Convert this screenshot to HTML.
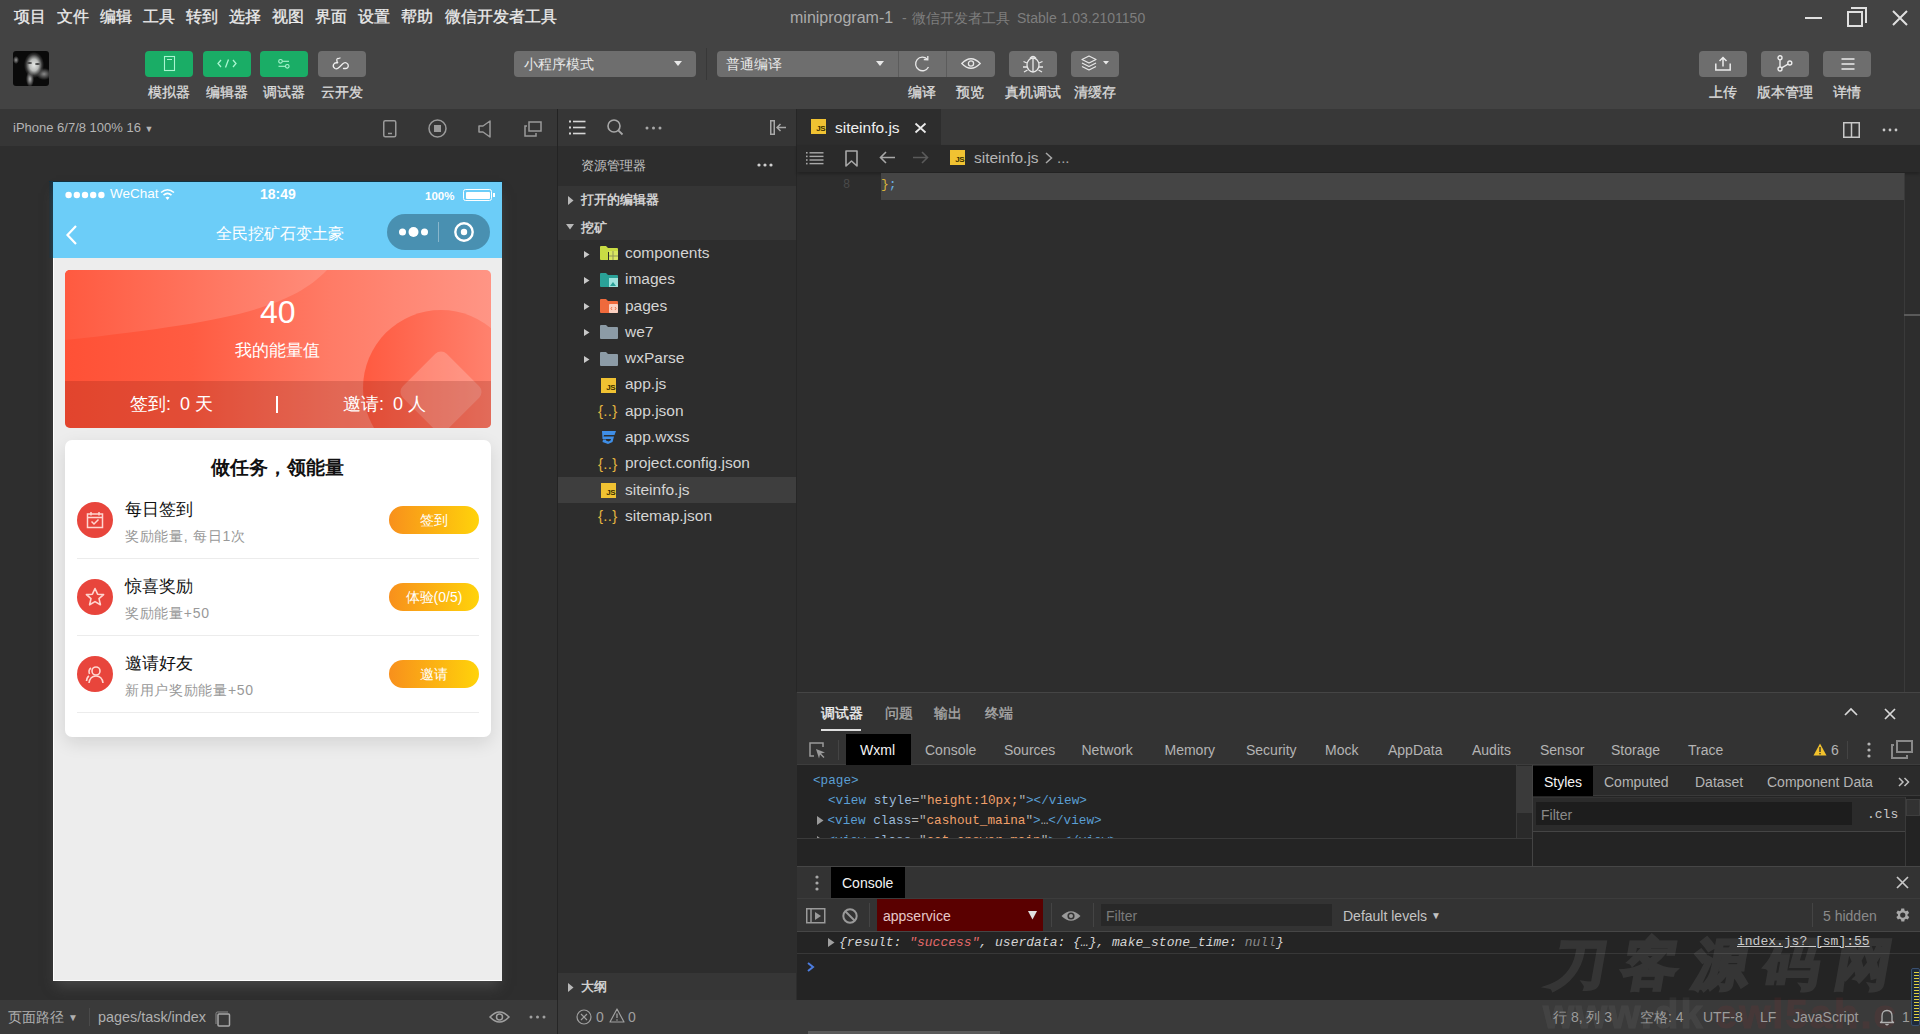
<!DOCTYPE html>
<html><head><meta charset="utf-8">
<style>
*{box-sizing:border-box;margin:0;padding:0}
html,body{width:1920px;height:1034px;overflow:hidden;background:#2d2d2d;font-family:"Liberation Sans",sans-serif;position:relative}
.menu span,.lbl{-webkit-text-stroke-width:0.3px}
.a{position:absolute}
.t{position:absolute;white-space:nowrap;line-height:1}
svg{position:absolute;overflow:visible}
.menu span{position:absolute;top:9px;font-size:16px;color:#ececec;line-height:1;white-space:nowrap}
.btn{position:absolute;top:51px;width:48px;height:26px;border-radius:4px;background:#6e6e6e}
.g{background:#1aad66}
.lbl{position:absolute;top:85px;font-size:14px;color:#dcdcdc;line-height:1;white-space:nowrap;transform:translateX(-50%)}
</style></head><body>
<!-- top bar -->
<div class="a" style="left:0;top:0;width:1920px;height:109px;background:#434343"></div>
<div class="menu">
<span style="left:14px">项目</span><span style="left:57px">文件</span><span style="left:100px">编辑</span><span style="left:143px">工具</span><span style="left:186px">转到</span><span style="left:229px">选择</span><span style="left:272px">视图</span><span style="left:315px">界面</span><span style="left:358px">设置</span><span style="left:401px">帮助</span><span style="left:445px">微信开发者工具</span>
</div>
<div class="t" style="left:790px;top:10px;font-size:16px;color:#acacac">miniprogram-1</div>
<div class="t" style="left:902px;top:11px;font-size:14px;color:#7e7e7e">-</div>
<div class="t" style="left:912px;top:11px;font-size:14.3px;color:#7e7e7e">微信开发者工具</div>
<div class="t" style="left:1017px;top:11px;font-size:14px;color:#7e7e7e">Stable 1.03.2101150</div>
<!-- window controls -->
<div class="a" style="left:1805px;top:17px;width:17px;height:2px;background:#e0e0e0"></div>
<div class="a" style="left:1847px;top:11px;width:16px;height:16px;border:2px solid #e0e0e0"></div>
<div class="a" style="left:1851px;top:7px;width:16px;height:16px;border-top:2px solid #e0e0e0;border-right:2px solid #e0e0e0"></div>
<svg style="left:1892px;top:10px" width="16" height="16"><path d="M1 1L15 15M15 1L1 15" stroke="#e0e0e0" stroke-width="2"/></svg>

<!-- avatar -->
<div class="a" style="left:13px;top:51px;width:36px;height:35px;border-radius:3px;overflow:hidden;background:
radial-gradient(ellipse 10px 13px at 21px 14px,#e6e8e6 0%,#b8bab8 45%,rgba(80,80,80,0.6) 80%,rgba(0,0,0,0) 100%),
radial-gradient(ellipse 4px 8px at 17px 28px,#bbb 0%,rgba(0,0,0,0) 100%),
radial-gradient(ellipse 8px 6px at 31px 23px,#8a8a8a 0%,rgba(0,0,0,0) 100%),
radial-gradient(ellipse 3px 4px at 3px 9px,#999 0%,rgba(0,0,0,0) 100%),
#0a0a0a">
<div class="a" style="left:14px;top:11px;width:5px;height:2px;background:#444;border-radius:50%;filter:blur(0.6px)"></div>
<div class="a" style="left:22px;top:12px;width:5px;height:2px;background:#444;border-radius:50%;filter:blur(0.6px)"></div>
</div>
<!-- left buttons -->
<div class="btn g" style="left:145px"></div>
<div class="btn g" style="left:203px"></div>
<div class="btn g" style="left:260px"></div>
<div class="btn" style="left:318px"></div>
<div class="lbl" style="left:169px">模拟器</div>
<div class="lbl" style="left:227px">编辑器</div>
<div class="lbl" style="left:284px">调试器</div>
<div class="lbl" style="left:342px">云开发</div>

<!-- mode dropdown -->
<div class="btn" style="left:514px;width:182px"></div>
<div class="t" style="left:524px;top:57px;font-size:14px;color:#e8e8e8">小程序模式</div>
<div class="a" style="left:706px;top:48px;width:1px;height:32px;background:#383838"></div>
<div class="btn" style="left:717px;width:278px"></div>
<div class="t" style="left:726px;top:57px;font-size:14px;color:#e8e8e8">普通编译</div>
<div class="a" style="left:898px;top:51px;width:1px;height:26px;background:#5c5c5c"></div>
<div class="a" style="left:946px;top:51px;width:1px;height:26px;background:#5c5c5c"></div>
<div class="btn" style="left:1009px"></div>
<div class="btn" style="left:1071px"></div>
<div class="lbl" style="left:922px">编译</div>
<div class="lbl" style="left:970px">预览</div>
<div class="lbl" style="left:1033px">真机调试</div>
<div class="lbl" style="left:1095px">清缓存</div>

<div class="btn" style="left:1699px"></div>
<div class="btn" style="left:1761px"></div>
<div class="btn" style="left:1823px"></div>
<div class="lbl" style="left:1723px">上传</div>
<div class="lbl" style="left:1785px">版本管理</div>
<div class="lbl" style="left:1847px">详情</div>



<!-- toolbar icons -->
<svg style="left:164px;top:56px" width="11" height="15"><rect x="0.5" y="0.5" width="10" height="14" fill="none" stroke="#a8f5cf" stroke-width="1.1"/><line x1="3" y1="3.5" x2="8" y2="3.5" stroke="#a8f5cf" stroke-width="1"/></svg>
<svg style="left:217px;top:59px" width="20" height="9"><path d="M4 1L1 4.5L4 8M16 1L19 4.5L16 8M11.5 0.5L8.5 8.5" fill="none" stroke="#a8f5cf" stroke-width="1.3"/></svg>
<svg style="left:278px;top:59px" width="12" height="10"><circle cx="2.5" cy="2.3" r="1.8" fill="none" stroke="#a8f5cf" stroke-width="1.1"/><line x1="4.3" y1="2.3" x2="11" y2="2.3" stroke="#a8f5cf" stroke-width="1.1"/><circle cx="9.3" cy="7.3" r="1.8" fill="none" stroke="#a8f5cf" stroke-width="1.1"/><line x1="0.5" y1="7.3" x2="7.5" y2="7.3" stroke="#a8f5cf" stroke-width="1.1"/></svg>
<svg style="left:332px;top:57px" width="18" height="13"><path d="M6.5 1.5Q5 1 4.8 3Q4.8 5 6 6Q3 5 1.5 7.5Q0.5 10 3 11.5Q5 12.5 7.5 10L10.5 7Q12.5 5 14.5 6Q16.5 7 16.3 9Q16 11.5 13.5 11.5L11.5 11.5" fill="none" stroke="#f0f0f0" stroke-width="1.3" stroke-linecap="round"/><path d="M6.5 1.5L8 1" fill="none" stroke="#f0f0f0" stroke-width="1.3" stroke-linecap="round"/></svg>
<svg style="left:674px;top:61px" width="8" height="6"><path d="M0 0L8 0L4 5Z" fill="#e8e8e8"/></svg>
<svg style="left:876px;top:61px" width="8" height="6"><path d="M0 0L8 0L4 5Z" fill="#e8e8e8"/></svg>
<svg style="left:914px;top:55px" width="17" height="17"><path d="M13.3 4.2A6.8 6.8 0 1 0 14.5 12" fill="none" stroke="#e8e8e8" stroke-width="1.3"/><path d="M9.8 4.5L13.8 4.8L13.8 1" fill="none" stroke="#e8e8e8" stroke-width="1.3"/></svg>
<svg style="left:961px;top:57px" width="20" height="13"><path d="M0.8 6.5Q10 -3 19.2 6.5Q10 16 0.8 6.5Z" fill="none" stroke="#e8e8e8" stroke-width="1.3"/><circle cx="10" cy="6.5" r="2.6" fill="none" stroke="#e8e8e8" stroke-width="1.3"/></svg>
<svg style="left:1022px;top:54px" width="22" height="19"><ellipse cx="11" cy="11" rx="6" ry="7" fill="none" stroke="#e8e8e8" stroke-width="1.3"/><path d="M8 4.5Q11 0.5 14 4.5" fill="none" stroke="#e8e8e8" stroke-width="1.3"/><line x1="11" y1="4" x2="11" y2="18" stroke="#e8e8e8" stroke-width="1.3"/><path d="M5 9L1.5 7.5M17 9L20.5 7.5M5 13L1 13M17 13L21 13M5.5 16L2 18M16.5 16L20 18" stroke="#e8e8e8" stroke-width="1.3"/></svg>
<svg style="left:1081px;top:55px" width="28" height="17"><path d="M8 1L15 4.5L8 8L1 4.5Z" fill="none" stroke="#e8e8e8" stroke-width="1.2" stroke-linejoin="round"/><path d="M1 8L8 11.5L15 8M1 11.5L8 15L15 11.5" fill="none" stroke="#e8e8e8" stroke-width="1.2" stroke-linejoin="round"/><path d="M22 6L28 6L25 9.5Z" fill="#e8e8e8"/></svg>
<svg style="left:1715px;top:56px" width="16" height="15"><path d="M8 10.5L8 1.5M4.5 5L8 1.5L11.5 5" fill="none" stroke="#ececec" stroke-width="1.5"/><path d="M0.8 7.5L0.8 14L15.2 14L15.2 7.5" fill="none" stroke="#ececec" stroke-width="1.5"/></svg>
<svg style="left:1777px;top:55px" width="16" height="17"><circle cx="3" cy="2.8" r="2" fill="none" stroke="#ececec" stroke-width="1.4"/><circle cx="3" cy="14" r="2" fill="none" stroke="#ececec" stroke-width="1.4"/><circle cx="12.8" cy="8" r="2" fill="none" stroke="#ececec" stroke-width="1.4"/><line x1="3" y1="4.8" x2="3" y2="12" stroke="#ececec" stroke-width="1.4"/><path d="M11 9.2L4.6 12.8" fill="none" stroke="#ececec" stroke-width="1.4"/></svg>
<svg style="left:1841px;top:58px" width="14" height="12"><path d="M0.5 1L13.5 1M0.5 6L13.5 6M0.5 11L13.5 11" stroke="#ececec" stroke-width="1.5"/></svg>
<!-- sim header -->
<div class="a" style="left:0;top:109px;width:557px;height:37px;background:#363636"></div>
<div class="t" style="left:13px;top:121px;font-size:13px;color:#b4b4b4">iPhone 6/7/8 100% 16 <span style="font-size:9px">&#9660;</span></div>
<svg style="left:383px;top:120px" width="14" height="18"><rect x="0.75" y="0.75" width="12" height="16" rx="1.5" fill="none" stroke="#9a9a9a" stroke-width="1.5"/><line x1="5" y1="13.5" x2="9" y2="13.5" stroke="#9a9a9a" stroke-width="1.5"/></svg>
<svg style="left:428px;top:119px" width="19" height="19"><circle cx="9.5" cy="9.5" r="8.5" fill="none" stroke="#9a9a9a" stroke-width="1.5"/><rect x="6" y="6" width="7" height="7" fill="#9a9a9a"/></svg>
<svg style="left:478px;top:120px" width="13" height="18"><path d="M12 1L12 17L5 12L1 12L1 6L5 6Z" fill="none" stroke="#9a9a9a" stroke-width="1.5" stroke-linejoin="round"/></svg>
<svg style="left:524px;top:121px" width="18" height="16"><rect x="5" y="1" width="12" height="9" fill="none" stroke="#9a9a9a" stroke-width="1.5"/><path d="M3 5L1 5L1 15L12 15L12 12" fill="none" stroke="#9a9a9a" stroke-width="1.5"/></svg>
<!-- sim body -->
<div class="a" style="left:0;top:146px;width:557px;height:854px;background:#2e2e2e"></div>
<!-- phone -->
<div class="a" style="left:49px;top:181px;width:454px;height:1px;background:#123240"></div>
<div class="a" style="left:49px;top:181px;width:4px;height:77px;background:linear-gradient(90deg,rgba(20,45,60,0.3),#15384a)"></div>
<div class="a" style="left:53px;top:182px;width:449px;height:799px;background:#ededed;box-shadow:0 8px 12px -3px rgba(100,100,100,0.5);overflow:hidden">
  <div class="a" style="left:0;top:76px;width:449px;height:723px;box-shadow:inset 1px -1px 0 #fff;z-index:5"></div>
  <div class="a" style="left:0;top:0;width:449px;height:76px;background:#6ccdf8"></div>
  <svg style="left:12px;top:9px" width="42" height="8"><circle cx="3.6" cy="4" r="3.2" fill="#fff"/><circle cx="11.8" cy="4" r="3.2" fill="#fff"/><circle cx="20.0" cy="4" r="3.2" fill="#fff"/><circle cx="28.2" cy="4" r="3.2" fill="#fff"/><circle cx="36.4" cy="4" r="3.2" fill="#fff"/></svg>
  <div class="t" style="left:57px;top:5px;font-size:13.5px;color:#fff">WeChat</div>
  <svg style="left:107px;top:6px" width="15" height="13"><path d="M1 4.5Q7.5 -1 14 4.5" fill="none" stroke="#fff" stroke-width="1.6"/><path d="M3.5 7.2Q7.5 3.5 11.5 7.2" fill="none" stroke="#fff" stroke-width="1.6"/><path d="M5.5 9.6L7.5 12L9.5 9.6Q7.5 7.8 5.5 9.6Z" fill="#fff"/></svg>
  <div class="t" style="left:207px;top:5px;font-size:14px;color:#fff;font-weight:bold">18:49</div>
  <div class="t" style="left:372px;top:9px;font-size:11.5px;color:#fff;font-weight:bold">100%</div>
  <div class="a" style="left:410px;top:7px;width:29px;height:12px;border:1.5px solid #fff;border-radius:2.5px;padding:1.5px"><div style="width:100%;height:100%;background:#fff;border-radius:1px"></div></div>
  <div class="a" style="left:440px;top:11px;width:2px;height:4px;background:#fff"></div>
  <svg style="left:12px;top:42px" width="14" height="22"><path d="M11 2L2.5 11L11 20" fill="none" stroke="#fff" stroke-width="2.2"/></svg>
  <div class="t" style="left:163px;top:44px;font-size:15.5px;color:#fff">全民挖矿石变土豪</div>
  <div class="a" style="left:334px;top:32px;width:103px;height:36px;border-radius:18px;background:rgba(30,70,90,0.45)"></div>
  <svg style="left:334px;top:32px" width="103" height="36"><circle cx="15.5" cy="18" r="3.5" fill="#fff"/><circle cx="26.5" cy="18" r="5" fill="#fff"/><circle cx="37.5" cy="18" r="3.5" fill="#fff"/><line x1="51.5" y1="8" x2="51.5" y2="28" stroke="rgba(255,255,255,0.35)" stroke-width="1"/><circle cx="77" cy="18" r="8.7" fill="none" stroke="#fff" stroke-width="2.4"/><circle cx="77" cy="18" r="3.2" fill="#fff"/></svg>
  <!-- red card -->
  <div class="a" style="left:12px;top:88px;width:426px;height:158px;border-radius:5px;overflow:hidden;background:linear-gradient(90deg,#ff5136 0%,#ff5c42 30%,#ff7b66 62%,#ff9585 100%)">
    <svg style="left:0;top:0" width="426" height="158"><defs><linearGradient id="lg1" x1="0" x2="1" y1="0" y2="0"><stop offset="0" stop-color="#ff5a40"/><stop offset="1" stop-color="#ff8d7b"/></linearGradient><linearGradient id="lg2" x1="0" x2="1" y1="0" y2="0"><stop offset="0" stop-color="#ff5a40"/><stop offset="1" stop-color="#ff8a78"/></linearGradient></defs>
    <path d="M0 0L262 0C225 38 165 52 0 70Z" fill="url(#lg1)"/>
    <circle cx="376" cy="118" r="78" fill="url(#lg2)"/>
    <rect x="345" y="91" width="62" height="62" rx="8" transform="rotate(45 376 122)" fill="rgba(255,255,255,0.2)"/>
    </svg>
    <div class="a" style="left:0;top:111px;width:426px;height:47px;background:rgba(110,20,10,0.2)"></div>
  </div>
<div class="t" style="left:207px;top:114px;font-size:32px;color:#fff">40</div>
  <div class="t" style="left:182px;top:160px;font-size:17px;color:#fff">我的能量值</div>
  <div class="t" style="left:77px;top:213px;font-size:18px;color:#fff">签到:<span style="margin-left:9px">0 天</span></div>
  <div class="a" style="left:223px;top:214px;width:2px;height:17px;background:#fff"></div>
  <div class="t" style="left:290px;top:213px;font-size:18px;color:#fff">邀请:<span style="margin-left:9px">0 人</span></div>
  <!-- task card -->
  <div class="a" style="left:12px;top:258px;width:426px;height:297px;border-radius:7px;background:#fff;box-shadow:0 6px 18px rgba(0,0,0,0.11)"></div>
  <div class="t" style="left:158px;top:276px;font-size:19px;color:#111;font-weight:bold">做任务，领能量</div>
  <div class="a" style="left:24px;top:320px;width:36px;height:36px;border-radius:50%;background:#e8453c"></div>
  <svg style="left:33px;top:329px" width="18" height="18"><rect x="1.5" y="3" width="15" height="13.5" fill="none" stroke="#ffd6d0" stroke-width="1.5"/><line x1="1.5" y1="6.5" x2="16.5" y2="6.5" stroke="#ffd6d0" stroke-width="1.5"/><line x1="5" y1="1" x2="5" y2="4.5" stroke="#ffd6d0" stroke-width="1.5"/><line x1="13" y1="1" x2="13" y2="4.5" stroke="#ffd6d0" stroke-width="1.5"/><path d="M5.5 10.5L8 13L12.5 8.5" fill="none" stroke="#ffd6d0" stroke-width="1.5"/></svg>
  <div class="t" style="left:72px;top:319px;font-size:17px;color:#111">每日签到</div>
  <div class="t" style="left:72px;top:347px;font-size:14px;color:#999;letter-spacing:0.7px">奖励能量, 每日1次</div>
  <div class="a" style="left:336px;top:324px;width:90px;height:28px;border-radius:14px;background:linear-gradient(90deg,#f8901c,#ffd30a);color:#fff;font-size:14px;line-height:28px;text-align:center">签到</div>
  <div class="a" style="left:24px;top:376px;width:402px;height:1px;background:#ececec"></div>
<div class="a" style="left:24px;top:397px;width:36px;height:36px;border-radius:50%;background:#e8453c"></div>
  <svg style="left:32px;top:405px" width="20" height="20"><path d="M10 1.5L12.6 7.2L18.6 7.6L14 11.6L15.4 17.8L10 14.6L4.6 17.8L6 11.6L1.4 7.6L7.4 7.2Z" fill="none" stroke="#ffd6d0" stroke-width="1.6" stroke-linejoin="round"/></svg>
  <div class="t" style="left:72px;top:396px;font-size:17px;color:#111">惊喜奖励</div>
  <div class="t" style="left:72px;top:424px;font-size:14px;color:#999;letter-spacing:0.7px">奖励能量+50</div>
  <div class="a" style="left:336px;top:401px;width:90px;height:28px;border-radius:14px;background:linear-gradient(90deg,#f8901c,#ffd30a);color:#fff;font-size:14px;line-height:28px;text-align:center">体验(0/5)</div>
  <div class="a" style="left:24px;top:453px;width:402px;height:1px;background:#ececec"></div>
<div class="a" style="left:24px;top:474px;width:36px;height:36px;border-radius:50%;background:#e8453c"></div>
  <svg style="left:32px;top:483px" width="20" height="20"><circle cx="11" cy="6" r="4" fill="none" stroke="#ffd6d0" stroke-width="1.6"/><path d="M4 18Q5 11 11 11Q17 11 18 18" fill="none" stroke="#ffd6d0" stroke-width="1.6"/><path d="M6 3Q3 5 4.5 9" fill="none" stroke="#ffd6d0" stroke-width="1.6"/><path d="M1.5 16Q2 12 4 11" fill="none" stroke="#ffd6d0" stroke-width="1.6"/></svg>
  <div class="t" style="left:72px;top:473px;font-size:17px;color:#111">邀请好友</div>
  <div class="t" style="left:72px;top:501px;font-size:14px;color:#999;letter-spacing:0.7px">新用户奖励能量+50</div>
  <div class="a" style="left:336px;top:478px;width:90px;height:28px;border-radius:14px;background:linear-gradient(90deg,#f8901c,#ffd30a);color:#fff;font-size:14px;line-height:28px;text-align:center">邀请</div>
  <div class="a" style="left:24px;top:530px;width:402px;height:1px;background:#ececec"></div>

</div>

<div class="a" style="left:557px;top:109px;width:1px;height:891px;background:#232323"></div>
<!-- explorer -->
<div class="a" style="left:558px;top:109px;width:238px;height:37px;background:#363636"></div>
<div class="a" style="left:558px;top:146px;width:238px;height:854px;background:#2d2d2d"></div>
<svg style="left:569px;top:120px" width="17" height="15"><g fill="#d6d6d6"><rect x="0" y="0.5" width="2" height="2"/><rect x="0" y="6.5" width="2" height="2"/><rect x="0" y="12.5" width="2" height="2"/><rect x="4" y="0.7" width="12.5" height="1.6"/><rect x="4" y="6.7" width="12.5" height="1.6"/><rect x="4" y="12.7" width="12.5" height="1.6"/></g></svg>
<svg style="left:607px;top:119px" width="17" height="17"><circle cx="7" cy="7" r="6" fill="none" stroke="#a8a8a8" stroke-width="1.6"/><line x1="11.3" y1="11.3" x2="15.5" y2="15.5" stroke="#a8a8a8" stroke-width="1.8"/></svg>
<svg style="left:645px;top:126px" width="17" height="4"><circle cx="2" cy="2" r="1.5" fill="#a8a8a8"/><circle cx="8.5" cy="2" r="1.5" fill="#a8a8a8"/><circle cx="15" cy="2" r="1.5" fill="#a8a8a8"/></svg>
<svg style="left:770px;top:120px" width="17" height="15"><rect x="0.75" y="0.75" width="3.5" height="13.5" fill="none" stroke="#a8a8a8" stroke-width="1.5"/><path d="M16 7.5L7 7.5M10.5 4L7 7.5L10.5 11" fill="none" stroke="#a8a8a8" stroke-width="1.5"/></svg>
<div class="t" style="left:581px;top:159px;font-size:13px;color:#c4c4c4">资源管理器</div>
<svg style="left:757px;top:163px" width="16" height="4"><circle cx="2" cy="2" r="1.6" fill="#d0d0d0"/><circle cx="8" cy="2" r="1.6" fill="#d0d0d0"/><circle cx="14" cy="2" r="1.6" fill="#d0d0d0"/></svg>
<div class="a" style="left:558px;top:186px;width:238px;height:54px;background:#353535"></div>
<svg style="left:568px;top:196px" width="6" height="9"><path d="M0 0L5.5 4.5L0 9Z" fill="#b8b8b8"/></svg>
<div class="t" style="left:581px;top:193px;font-size:13px;color:#d0d0d0;font-weight:bold">打开的编辑器</div>
<svg style="left:566px;top:224px" width="8" height="6"><path d="M0 0L8 0L4 5.5Z" fill="#b8b8b8"/></svg>
<div class="t" style="left:581px;top:221px;font-size:13px;color:#d0d0d0;font-weight:bold">挖矿</div>
<div class="a" style="left:558px;top:477px;width:238px;height:26px;background:#3e3e3e"></div>
<svg style="left:584px;top:251px" width="6" height="7"><path d="M0 0L5.5 3.5L0 7Z" fill="#c8c8c8"/></svg><svg style="left:600px;top:246px" width="18" height="14"><path d="M0 1Q0 0 1 0L6 0L8 2L17 2Q18 2 18 3L18 13Q18 14 17 14L1 14Q0 14 0 13Z" fill="#c9dc44"/><g fill="#2c2c2c"><rect x="8" y="6" width="1" height="8"/><rect x="8" y="9.5" width="10" height="1"/><rect x="12.5" y="5" width="1" height="9"/></g><rect x="9" y="5" width="9" height="9" fill="#e6f07a" opacity="0.55"/></svg><div class="t" style="left:625px;top:245px;font-size:15.5px;color:#d4d4d4">components</div><svg style="left:584px;top:277px" width="6" height="7"><path d="M0 0L5.5 3.5L0 7Z" fill="#c8c8c8"/></svg><svg style="left:600px;top:273px" width="18" height="14"><path d="M0 1Q0 0 1 0L6 0L8 2L17 2Q18 2 18 3L18 13Q18 14 17 14L1 14Q0 14 0 13Z" fill="#2aa198"/><rect x="9" y="5" width="9" height="9" fill="#9fe3de"/><path d="M10 13L13 9L16 13Z" fill="#2aa198"/></svg><div class="t" style="left:625px;top:271px;font-size:15.5px;color:#d4d4d4">images</div><svg style="left:584px;top:303px" width="6" height="7"><path d="M0 0L5.5 3.5L0 7Z" fill="#c8c8c8"/></svg><svg style="left:600px;top:299px" width="18" height="14"><path d="M0 1Q0 0 1 0L6 0L8 2L17 2Q18 2 18 3L18 13Q18 14 17 14L1 14Q0 14 0 13Z" fill="#ef6a3c"/><rect x="9" y="5" width="9" height="9" rx="1" fill="#fbd0c0"/><path d="M12 8L11 9.5L12 11M15 8L16 9.5L15 11" fill="none" stroke="#ef6a3c" stroke-width="0.9"/></svg><div class="t" style="left:625px;top:298px;font-size:15.5px;color:#d4d4d4">pages</div><svg style="left:584px;top:329px" width="6" height="7"><path d="M0 0L5.5 3.5L0 7Z" fill="#c8c8c8"/></svg><svg style="left:600px;top:325px" width="18" height="14"><path d="M0 1Q0 0 1 0L6 0L8 2L17 2Q18 2 18 3L18 13Q18 14 17 14L1 14Q0 14 0 13Z" fill="#8c9ba6"/></svg><div class="t" style="left:625px;top:324px;font-size:15.5px;color:#d4d4d4">we7</div><svg style="left:584px;top:356px" width="6" height="7"><path d="M0 0L5.5 3.5L0 7Z" fill="#c8c8c8"/></svg><svg style="left:600px;top:352px" width="18" height="14"><path d="M0 1Q0 0 1 0L6 0L8 2L17 2Q18 2 18 3L18 13Q18 14 17 14L1 14Q0 14 0 13Z" fill="#8c9ba6"/></svg><div class="t" style="left:625px;top:350px;font-size:15.5px;color:#d4d4d4">wxParse</div><div class="a" style="left:601px;top:378px;width:15px;height:15px;background:#f0c232"><span class="t" style="right:1px;bottom:1px;font-size:8px;color:#3a3000;font-weight:bold;letter-spacing:-0.5px">JS</span></div><div class="t" style="left:625px;top:376px;font-size:15.5px;color:#d4d4d4">app.js</div><div class="t" style="left:598px;top:403px;font-size:15px;color:#e2b440;letter-spacing:0.3px">{..}</div><div class="t" style="left:625px;top:403px;font-size:15.5px;color:#d4d4d4">app.json</div><svg style="left:601px;top:431px" width="16" height="14"><path d="M1 0L15 0L13.5 4L3 4L2.5 5.5L13 5.5L11.5 11L7 13L1.5 11L2 8.5L5 8.5L5 9.5L7.5 10.5L9.5 9.5L10 8L1.5 8Z" fill="#3f8ee6"/></svg><div class="t" style="left:625px;top:429px;font-size:15.5px;color:#d4d4d4">app.wxss</div><div class="t" style="left:598px;top:456px;font-size:15px;color:#e2b440;letter-spacing:0.3px">{..}</div><div class="t" style="left:625px;top:455px;font-size:15.5px;color:#d4d4d4">project.config.json</div><div class="a" style="left:601px;top:483px;width:15px;height:15px;background:#f0c232"><span class="t" style="right:1px;bottom:1px;font-size:8px;color:#3a3000;font-weight:bold;letter-spacing:-0.5px">JS</span></div><div class="t" style="left:625px;top:482px;font-size:15.5px;color:#d4d4d4">siteinfo.js</div><div class="t" style="left:598px;top:508px;font-size:15px;color:#e2b440;letter-spacing:0.3px">{..}</div><div class="t" style="left:625px;top:508px;font-size:15.5px;color:#d4d4d4">sitemap.json</div>
<!-- outline -->
<div class="a" style="left:558px;top:973px;width:238px;height:27px;background:#363636"></div>
<svg style="left:568px;top:983px" width="6" height="9"><path d="M0 0L5.5 4.5L0 9Z" fill="#b8b8b8"/></svg>
<div class="t" style="left:581px;top:980px;font-size:13px;color:#d0d0d0;font-weight:bold">大纲</div>

<!-- editor -->
<div class="a" style="left:796px;top:109px;width:1px;height:583px;background:#262626"></div>
<div class="a" style="left:797px;top:109px;width:1123px;height:36px;background:#383838"></div>
<div class="a" style="left:797px;top:109px;width:144px;height:36px;background:#2d2d2d"></div>
<div class="a" style="left:811px;top:119px;width:15px;height:15px;background:#f0c232"><span class="t" style="right:1px;bottom:1px;font-size:8px;color:#3a3000;font-weight:bold;letter-spacing:-0.5px">JS</span></div>
<div class="t" style="left:835px;top:120px;font-size:15.5px;color:#f0f0f0">siteinfo.js</div>
<svg style="left:915px;top:123px" width="11" height="10"><path d="M0.5 0.5L10.5 9.5M10.5 0.5L0.5 9.5" stroke="#eaeaea" stroke-width="1.8"/></svg>
<svg style="left:1843px;top:122px" width="17" height="16"><rect x="0.75" y="0.75" width="15.5" height="14.5" fill="none" stroke="#c8c8c8" stroke-width="1.5"/><line x1="8.5" y1="1" x2="8.5" y2="15" stroke="#c8c8c8" stroke-width="1.5"/></svg>
<svg style="left:1882px;top:128px" width="16" height="4"><circle cx="2" cy="2" r="1.4" fill="#c8c8c8"/><circle cx="8" cy="2" r="1.4" fill="#c8c8c8"/><circle cx="14" cy="2" r="1.4" fill="#c8c8c8"/></svg>
<div class="a" style="left:797px;top:145px;width:1123px;height:547px;background:#2d2d2d"></div>
<div class="a" style="left:797px;top:145px;width:1123px;height:27px;background:#2a2a2a;box-shadow:0 2px 3px rgba(0,0,0,0.25)"></div>
<svg style="left:806px;top:152px" width="18" height="13"><g fill="#a8a8a8"><rect x="0" y="0" width="1.6" height="1.6"/><rect x="0" y="3.6" width="1.6" height="1.6"/><rect x="0" y="7.2" width="1.6" height="1.6"/><rect x="0" y="10.8" width="1.6" height="1.6"/><rect x="3.5" y="0.1" width="14" height="1.4"/><rect x="3.5" y="3.7" width="14" height="1.4"/><rect x="3.5" y="7.3" width="14" height="1.4"/><rect x="3.5" y="10.9" width="14" height="1.4"/></g></svg>
<svg style="left:845px;top:150px" width="13" height="17"><path d="M1 1L12 1L12 16L6.5 11L1 16Z" fill="none" stroke="#a8a8a8" stroke-width="1.6" stroke-linejoin="round"/></svg>
<svg style="left:879px;top:151px" width="17" height="13"><path d="M16 6.5L1.5 6.5M7 1L1.5 6.5L7 12" fill="none" stroke="#a8a8a8" stroke-width="1.6"/></svg>
<svg style="left:913px;top:151px" width="16" height="13"><path d="M0 6.5L14.5 6.5M9 1L14.5 6.5L9 12" fill="none" stroke="#5a5a5a" stroke-width="1.6"/></svg>
<div class="a" style="left:950px;top:150px;width:15px;height:15px;background:#f0c232"><span class="t" style="right:1px;bottom:1px;font-size:8px;color:#3a3000;font-weight:bold;letter-spacing:-0.5px">JS</span></div>
<div class="t" style="left:974px;top:150px;font-size:15.5px;color:#b4b4b4">siteinfo.js</div>
<svg style="left:1045px;top:152px" width="8" height="12"><path d="M1 1L6.5 6L1 11" fill="none" stroke="#a8a8a8" stroke-width="1.5"/></svg>
<div class="t" style="left:1057px;top:150px;font-size:15px;color:#a8a8a8">...</div>
<div class="a" style="left:881px;top:173px;width:1023px;height:27px;background:#454545"></div>
<div class="a" style="left:1904px;top:173px;width:1px;height:519px;background:#3a3a3a"></div>
<div class="a" style="left:1904px;top:314px;width:16px;height:2px;background:#5a5a5a"></div>
<div class="t" style="left:843px;top:179px;font-size:12px;color:#4a4a4a;font-family:'Liberation Mono',monospace">8</div>
<div class="t" style="left:881px;top:178px;font-size:13px;font-family:'Liberation Mono',monospace"><span style="color:#d7b23a">}</span><span style="color:#6cb0e0">;</span></div>

<!-- debugger -->
<div class="a" style="left:797px;top:692px;width:1123px;height:308px;background:#333333"></div>
<div class="a" style="left:797px;top:692px;width:1123px;height:1px;background:#454545"></div>
<div class="t" style="left:821px;top:707px;font-size:13.5px;color:#f0f0f0;-webkit-text-stroke:0.35px #f0f0f0">调试器</div>
<div class="t" style="left:885px;top:707px;font-size:13.5px;color:#a8a8a8;-webkit-text-stroke:0.35px #a8a8a8">问题</div>
<div class="t" style="left:934px;top:707px;font-size:13.5px;color:#a8a8a8;-webkit-text-stroke:0.35px #a8a8a8">输出</div>
<div class="t" style="left:985px;top:707px;font-size:13.5px;color:#a8a8a8;-webkit-text-stroke:0.35px #a8a8a8">终端</div>
<div class="a" style="left:821px;top:729px;width:40px;height:2px;background:#e0e0e0"></div>
<svg style="left:1844px;top:707px" width="14" height="9"><path d="M1 8L7 2L13 8" fill="none" stroke="#d8d8d8" stroke-width="1.7"/></svg>
<svg style="left:1884px;top:708px" width="12" height="12"><path d="M1 1L11 11M11 1L1 11" stroke="#d8d8d8" stroke-width="1.7"/></svg>
<!-- devtools tabbar -->
<div class="a" style="left:797px;top:734px;width:1123px;height:31px;background:#333333;border-bottom:1px solid #3d3d3d"></div>
<svg style="left:809px;top:742px" width="17" height="16"><path d="M5 14L1 14L1 1L14 1L14 5" fill="none" stroke="#9a9a9a" stroke-width="1.5"/><path d="M7 7L16 10.5L12 11.5L15.5 15L14.5 16L11 12.5L10 16.5Z" fill="#9a9a9a"/></svg>
<div class="a" style="left:838px;top:740px;width:1px;height:20px;background:#444"></div>
<div class="a" style="left:846px;top:734px;width:65px;height:31px;background:#000"></div>
<div class="t" style="left:860px;top:743px;font-size:14px;color:#f4f4f4">Wxml</div>
<div class="t" style="left:925px;top:743px;font-size:14px;color:#b4b4b4">Console</div>
<div class="t" style="left:1004px;top:743px;font-size:14px;color:#b4b4b4">Sources</div>
<div class="t" style="left:1081.5px;top:743px;font-size:14px;color:#b4b4b4">Network</div>
<div class="t" style="left:1164.5px;top:743px;font-size:14px;color:#b4b4b4">Memory</div>
<div class="t" style="left:1246px;top:743px;font-size:14px;color:#b4b4b4">Security</div>
<div class="t" style="left:1325px;top:743px;font-size:14px;color:#b4b4b4">Mock</div>
<div class="t" style="left:1388px;top:743px;font-size:14px;color:#b4b4b4">AppData</div>
<div class="t" style="left:1472px;top:743px;font-size:14px;color:#b4b4b4">Audits</div>
<div class="t" style="left:1540px;top:743px;font-size:14px;color:#b4b4b4">Sensor</div>
<div class="t" style="left:1611px;top:743px;font-size:14px;color:#b4b4b4">Storage</div>
<div class="t" style="left:1688px;top:743px;font-size:14px;color:#b4b4b4">Trace</div>

<svg style="left:1813px;top:743px" width="14" height="13"><path d="M7 0.5L13.5 12.5L0.5 12.5Z" fill="#f2c22c"/><rect x="6.3" y="4" width="1.4" height="5" fill="#333"/><rect x="6.3" y="10" width="1.4" height="1.4" fill="#333"/></svg>
<div class="t" style="left:1831px;top:743px;font-size:14px;color:#b4b4b4">6</div>
<div class="a" style="left:1847px;top:741px;width:1px;height:18px;background:#444"></div>
<svg style="left:1867px;top:742px" width="4" height="16"><circle cx="2" cy="2" r="1.6" fill="#b4b4b4"/><circle cx="2" cy="8" r="1.6" fill="#b4b4b4"/><circle cx="2" cy="14" r="1.6" fill="#b4b4b4"/></svg>
<svg style="left:1891px;top:740px" width="22" height="19"><rect x="6" y="1" width="15" height="11" fill="none" stroke="#8a8a8a" stroke-width="2"/><path d="M3 5L1 5L1 18L16 18L16 15" fill="none" stroke="#8a8a8a" stroke-width="2"/></svg>
<!-- elements content -->
<div class="a" style="left:797px;top:765px;width:719px;height:73px;background:#242424;overflow:hidden">
  <div class="t" style="left:16px;top:9.5px;font-size:12.7px;font-family:'Liberation Mono',monospace;color:#5a9fd4">&lt;page&gt;</div>
  <div class="t" style="left:31px;top:29.5px;font-size:12.7px;font-family:'Liberation Mono',monospace;color:#5a9fd4">&lt;view <span style="color:#9bbbdc">style</span><span style="color:#b0b0b0">="</span><span style="color:#f0a06a">height:10px;</span><span style="color:#b0b0b0">"</span>&gt;&lt;/view&gt;</div>
  <svg style="left:20px;top:51px" width="7" height="9"><path d="M0 0L6.5 4.5L0 9Z" fill="#9a9a9a"/></svg>
  <div class="t" style="left:30.5px;top:49.5px;font-size:12.7px;font-family:'Liberation Mono',monospace;color:#5a9fd4">&lt;view <span style="color:#9bbbdc">class</span><span style="color:#b0b0b0">="</span><span style="color:#f0a06a">cashout_maina</span><span style="color:#b0b0b0">"</span>&gt;<span style="color:#b0b0b0">…</span>&lt;/view&gt;</div>
  <svg style="left:20px;top:71px" width="7" height="9"><path d="M0 0L6.5 4.5L0 9Z" fill="#9a9a9a"/></svg>
  <div class="t" style="left:30.5px;top:69.5px;font-size:12.7px;font-family:'Liberation Mono',monospace;color:#5a9fd4">&lt;view <span style="color:#9bbbdc">class</span><span style="color:#b0b0b0">="</span><span style="color:#f0a06a">cat_answer_main</span><span style="color:#b0b0b0">"</span>&gt;<span style="color:#b0b0b0">…</span>&lt;/view&gt;</div>
</div>
<div class="a" style="left:797px;top:838px;width:736px;height:28px;background:#242424;border-top:1px solid #3a3a3a"></div>
<div class="a" style="left:1516px;top:765px;width:17px;height:73px;background:#2a2a2a;border-left:1px solid #3a3a3a"></div>
<div class="a" style="left:1517px;top:766px;width:15px;height:47px;background:#3a3a3a"></div>
<!-- styles pane -->
<div class="a" style="left:1532px;top:765px;width:388px;height:101px;background:#242424;border-left:1px solid #444"></div>
<div class="a" style="left:1533px;top:766px;width:387px;height:30px;background:#2b2b2b;border-bottom:1px solid #3a3a3a"></div>
<div class="a" style="left:1533px;top:766px;width:60px;height:30px;background:#000"></div>
<div class="t" style="left:1544px;top:775px;font-size:14px;color:#f4f4f4">Styles</div>
<div class="t" style="left:1604px;top:775px;font-size:14px;color:#b4b4b4">Computed</div>
<div class="t" style="left:1695px;top:775px;font-size:14px;color:#b4b4b4">Dataset</div>
<div class="t" style="left:1767px;top:775px;font-size:14px;color:#b4b4b4">Component Data</div>
<svg style="left:1898px;top:777px" width="12" height="10"><path d="M1 1L5 5L1 9M6.5 1L10.5 5L6.5 9" fill="none" stroke="#c0c0c0" stroke-width="1.5"/></svg>
<div class="a" style="left:1533px;top:797px;width:372px;height:35px;background:#2b2b2b;border-top:1px solid #333;border-bottom:1px solid #454545"></div>
<div class="a" style="left:1536px;top:802px;width:316px;height:23px;background:#1d1d1d"></div>
<div class="t" style="left:1541px;top:808px;font-size:14px;color:#8a8a8a">Filter</div>
<div class="t" style="left:1867px;top:808px;font-size:13px;color:#c8c8c8;font-family:'Liberation Mono',monospace">.cls</div>
<div class="a" style="left:1905px;top:797px;width:15px;height:69px;background:#232323;border-left:1px solid #3a3a3a"></div>
<div class="a" style="left:1906px;top:799px;width:14px;height:17px;background:#323232;border:1px solid #3e3e3e"></div>
<!-- drawer -->
<div class="a" style="left:797px;top:866px;width:1123px;height:32px;background:#333333;border-top:1px solid #464646"></div>
<svg style="left:815px;top:875px" width="4" height="16"><circle cx="2" cy="2" r="1.6" fill="#a8a8a8"/><circle cx="2" cy="8" r="1.6" fill="#a8a8a8"/><circle cx="2" cy="14" r="1.6" fill="#a8a8a8"/></svg>
<div class="a" style="left:831px;top:867px;width:74px;height:31px;background:#000"></div>
<div class="t" style="left:842px;top:876px;font-size:14px;color:#f4f4f4">Console</div>
<svg style="left:1896px;top:876px" width="13" height="13"><path d="M1 1L12 12M12 1L1 12" stroke="#c8c8c8" stroke-width="1.7"/></svg>
<div class="a" style="left:797px;top:898px;width:1123px;height:34px;background:#333333;border-top:1px solid #3c3c3c;border-bottom:1px solid #464646"></div>
<svg style="left:806px;top:908px" width="20" height="16"><rect x="0.75" y="0.75" width="18" height="14" fill="none" stroke="#9a9a9a" stroke-width="1.5"/><line x1="5" y1="1" x2="5" y2="15" stroke="#9a9a9a" stroke-width="1.5"/><path d="M9 4L15 8L9 12Z" fill="#9a9a9a"/></svg>
<svg style="left:842px;top:908px" width="16" height="16"><circle cx="8" cy="8" r="6.7" fill="none" stroke="#9a9a9a" stroke-width="2"/><line x1="3.5" y1="3.5" x2="12.5" y2="12.5" stroke="#9a9a9a" stroke-width="2"/></svg>
<div class="a" style="left:869px;top:903px;width:1px;height:24px;background:#444"></div>
<div class="a" style="left:877px;top:899px;width:166px;height:32px;background:#5a0000"></div>
<div class="t" style="left:883px;top:909px;font-size:14px;color:#e6c8c8">appservice</div>
<svg style="left:1028px;top:911px" width="9" height="9"><path d="M0 0L9 0L4.5 8.5Z" fill="#e0e0e0"/></svg>
<div class="a" style="left:1051px;top:903px;width:1px;height:24px;background:#444"></div>
<svg style="left:1061px;top:909px" width="20" height="14"><path d="M0.5 7Q10 -2.5 19.5 7Q10 16.5 0.5 7Z" fill="#9a9a9a"/><circle cx="10" cy="7" r="3.6" fill="#333"/><circle cx="10" cy="7" r="2" fill="#9a9a9a"/></svg>
<div class="a" style="left:1093px;top:903px;width:1px;height:24px;background:#444"></div>
<div class="a" style="left:1101px;top:904px;width:231px;height:22px;background:#282828"></div>
<div class="t" style="left:1106px;top:909px;font-size:14px;color:#7a7a7a">Filter</div>
<div class="t" style="left:1343px;top:909px;font-size:14px;color:#c4c4c4">Default levels <span style="font-size:10px;position:relative;top:-2px">&#9660;</span></div>
<div class="a" style="left:1812px;top:903px;width:1px;height:24px;background:#444"></div>
<div class="t" style="left:1823px;top:909px;font-size:14px;color:#8a8a8a">5 hidden</div>
<svg style="left:1893px;top:906px" width="18" height="18" viewBox="0 0 24 24"><path fill="#a8a8a8" d="M19.4 13a7.5 7.5 0 0 0 0-2l2.1-1.6-2-3.5-2.5 1a7.3 7.3 0 0 0-1.7-1L15 3.2h-4l-.4 2.7a7.3 7.3 0 0 0-1.7 1l-2.5-1-2 3.5L6.6 11a7.5 7.5 0 0 0 0 2l-2.1 1.6 2 3.5 2.5-1a7.3 7.3 0 0 0 1.7 1l.4 2.7h4l.4-2.7a7.3 7.3 0 0 0 1.7-1l2.5 1 2-3.5zM13 15.5a3.5 3.5 0 1 1 0-7 3.5 3.5 0 0 1 0 7z"/></svg>
<!-- console output -->
<div class="a" style="left:797px;top:932px;width:1123px;height:68px;background:#242424"></div>
<div class="a" style="left:797px;top:953px;width:1123px;height:1px;background:#383838"></div>
<svg style="left:828px;top:938px" width="7" height="9"><path d="M0 0L6.5 4.5L0 9Z" fill="#a0a0a0"/></svg>
<div class="t" style="left:839px;top:936px;font-size:13px;font-family:'Liberation Mono',monospace;font-style:italic;color:#d4d4d4">{result: <span style="color:#e36a6a">"success"</span>, userdata: {…}, make_stone_time: <span style="color:#8a8a8a">null</span>}</div>
<div class="t" style="left:1737px;top:935px;font-size:13px;font-family:'Liberation Mono',monospace;color:#c8c8c8;text-decoration:underline">index.js? [sm]:55</div>
<svg style="left:807px;top:962px" width="8" height="10"><path d="M1 1L6 5L1 9" fill="none" stroke="#4c7de0" stroke-width="2"/></svg>
<div class="a" style="left:0;top:1000px;width:1920px;height:34px;background:#3a3a3a"></div>
<!-- sim status -->
<div class="t" style="left:8px;top:1010px;font-size:14.4px;color:#b0b0b0">页面路径 <span style="font-size:10px;position:relative;top:-1px">&#9660;</span></div>
<div class="a" style="left:89px;top:1008px;width:1px;height:18px;background:#4a4a4a"></div>
<div class="t" style="left:98px;top:1010px;font-size:14.4px;color:#b0b0b0">pages/task/index</div>
<svg style="left:215px;top:1011px" width="16" height="16"><path d="M1 13L1 2.5Q1 1 2.5 1L13 1" fill="none" stroke="#8a8a8a" stroke-width="1"/><rect x="3" y="3" width="11.5" height="12" rx="1" fill="none" stroke="#a8a8a8" stroke-width="1.5"/></svg>
<svg style="left:489px;top:1010px" width="21" height="14"><path d="M1 7Q10.5 -3 20 7Q10.5 17 1 7Z" fill="none" stroke="#a0a0a0" stroke-width="1.5"/><circle cx="10.5" cy="7" r="3" fill="none" stroke="#a0a0a0" stroke-width="1.5"/></svg>
<svg style="left:529px;top:1015px" width="17" height="4"><circle cx="2" cy="2" r="1.5" fill="#a0a0a0"/><circle cx="8.5" cy="2" r="1.5" fill="#a0a0a0"/><circle cx="15" cy="2" r="1.5" fill="#a0a0a0"/></svg>

<!-- status right -->
<div class="a" style="left:557px;top:1000px;width:1px;height:34px;background:#262626"></div>
<svg style="left:576px;top:1009px" width="16" height="16"><circle cx="8" cy="8" r="7" fill="none" stroke="#a0a0a0" stroke-width="1.2"/><path d="M5 5L11 11M11 5L5 11" stroke="#a0a0a0" stroke-width="1.2"/></svg>
<div class="t" style="left:596px;top:1010px;font-size:14px;color:#a0a0a0">0</div>
<svg style="left:609px;top:1008px" width="16" height="15"><path d="M8 1L15 14L1 14Z" fill="none" stroke="#a0a0a0" stroke-width="1.2" stroke-linejoin="round"/><line x1="8" y1="5.5" x2="8" y2="10" stroke="#a0a0a0" stroke-width="1.3"/><circle cx="8" cy="12" r="0.8" fill="#a0a0a0"/></svg>
<div class="t" style="left:628px;top:1010px;font-size:14px;color:#a0a0a0">0</div>
<div class="a" style="left:808px;top:1031px;width:192px;height:3px;background:#5a5a5a"></div>
<!-- watermark -->
<div class="a" style="left:0;top:0;width:1920px;height:1034px;opacity:0.08;pointer-events:none">
<div class="t" style="left:1552px;top:937px;font-size:55px;font-weight:bold;font-style:normal;color:#fff;-webkit-text-stroke:3px #fff;letter-spacing:16px;transform:skewX(-10deg)">刀客源码网</div>
<div class="t" style="left:1543px;top:994px;font-size:40px;font-weight:bold;color:#fff;-webkit-text-stroke:1px #fff;letter-spacing:2px;opacity:0.6">www.dk</div>
</div>
<div class="a" style="left:0;top:0;width:1920px;height:1034px;opacity:0.09;pointer-events:none">
<div class="t" style="left:1715px;top:994px;font-size:40px;font-weight:bold;color:#c02828;-webkit-text-stroke:1px #c02828;letter-spacing:2px">ewl5ah.c</div>
</div>
<div class="t" style="left:1553px;top:1010px;font-size:14px;color:#9c9c9c">行 8, 列 3</div>
<div class="t" style="left:1640px;top:1010px;font-size:14px;color:#9c9c9c">空格: 4</div>
<div class="t" style="left:1703px;top:1010px;font-size:14px;color:#9c9c9c">UTF-8</div>
<div class="t" style="left:1760px;top:1010px;font-size:14px;color:#9c9c9c">LF</div>
<div class="t" style="left:1793px;top:1010px;font-size:14px;color:#9c9c9c">JavaScript</div>
<svg style="left:1880px;top:1008px" width="14" height="18"><path d="M2 13L2 8Q2 2.5 7 2.5Q12 2.5 12 8L12 13L13.5 14.5L0.5 14.5Z" fill="none" stroke="#b0b0b0" stroke-width="1.3" stroke-linejoin="round"/><path d="M5.5 16Q7 17.5 8.5 16" fill="none" stroke="#b0b0b0" stroke-width="1.2"/></svg>
<div class="t" style="left:1902px;top:1010px;font-size:14px;color:#9c9c9c">1</div>
<div class="a" style="left:1911px;top:968px;width:9px;height:58px;background:#1f2a3a;border:1px solid #3a5070;border-radius:2px"></div>
<div class="a" style="left:1914px;top:972px;width:5px;height:50px;background:repeating-linear-gradient(180deg,#e0d040 0 1px,transparent 1px 3px)"></div>
</body></html>
